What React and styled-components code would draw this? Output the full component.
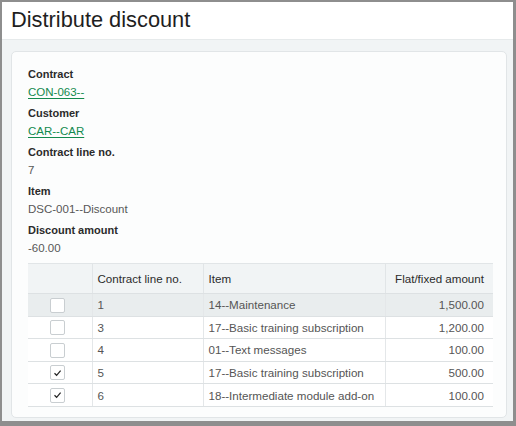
import React from "react";
import styled, { createGlobalStyle } from "styled-components";

const Global = createGlobalStyle`
  html, body { margin: 0; padding: 0; background: #8e8e8e; }
  body { font-family: "Liberation Sans", Arial, Helvetica, sans-serif; }
  * { box-sizing: border-box; }
`;

const Frame = styled.div`
  width: 516px;
  height: 426px;
  border-style: solid;
  border-color: #8e8e8e;
  border-width: 2px 3px 5px 2px;
  background: #f1f4f5;
  display: flex;
  flex-direction: column;
  overflow: hidden;
`;

const Header = styled.header`
  height: 38px;
  flex: none;
  background: #ffffff;
  border-bottom: 1px solid #e6eaeb;
  display: flex;
  align-items: center;
  padding-left: 9px;
`;

const Title = styled.h1`
  margin: 0;
  font-size: 21.8px;
  font-weight: 400;
  color: #1e1e1e;
  line-height: 1;
  padding-bottom: 1px;
`;

const Body = styled.main`
  flex: 1;
  padding: 11px 6px 6px 9px;
  display: flex;
  flex-direction: column;
`;

const Card = styled.section`
  flex: 1;
  background: #fcfdfd;
  border: 1px solid #e1e5e7;
  border-radius: 5px;
  padding: 14px 13px 10px 16px;
  display: flex;
  flex-direction: column;
`;

const Fields = styled.div`
  display: flex;
  flex-direction: column;
  gap: 5px;
`;

const Field = styled.div`
  display: flex;
  flex-direction: column;
`;

const Label = styled.div`
  font-size: 11px;
  font-weight: 700;
  color: #2b2b2b;
  line-height: 17px;
`;

const Value = styled.div`
  font-size: 11.5px;
  color: #575757;
  line-height: 17px;
  padding-top: 1px;
  margin-bottom: -1px;
`;

const Link = styled.a`
  font-size: 11.5px;
  line-height: 17px;
  padding-top: 1px;
  margin-bottom: -1px;
  color: #138a4e;
  text-decoration: underline;
  text-underline-offset: 2px;
  text-decoration-thickness: 1px;
  align-self: flex-start;
  cursor: pointer;
`;

const Table = styled.table`
  margin-top: 7px;
  width: 465px;
  border-collapse: collapse;
  table-layout: fixed;
  font-size: 11.6px;
`;

const Th = styled.th`
  height: 30px;
  background: #f1f4f5;
  border-top: 1px solid #e1e5e7;
  border-bottom: 1px solid #dde1e3;
  border-left: ${(p) => (p.$first ? "none" : "1px solid #e1e5e7")};
  font-weight: 400;
  color: #2b2b2b;
  text-align: ${(p) => (p.$right ? "right" : "left")};
  padding: 0 ${(p) => (p.$right ? "9px" : "5px")} 0 5px;
  white-space: nowrap;
`;

const Row = styled.tr`
  background: ${(p) => (p.$hover ? "#e9edee" : "#ffffff")};
`;

const Td = styled.td`
  height: 22.6px;
  border-bottom: 1px solid #dde1e3;
  border-left: ${(p) => (p.$first ? "none" : "1px solid #e4e7e9")};
  color: #555555;
  text-align: ${(p) => (p.$right ? "right" : p.$center ? "center" : "left")};
  padding: 0 ${(p) => (p.$right ? "9px" : "5px")} 0 ${(p) => (p.$center ? "0" : "5px")};
  white-space: nowrap;
  vertical-align: middle;
`;

const Box = styled.span`
  display: inline-flex;
  align-items: center;
  justify-content: center;
  width: 15px;
  height: 15px;
  background: #ffffff;
  border: 1px solid #c9ced1;
  border-radius: 2px;
  vertical-align: middle;
  margin-left: 1px;
`;

const Check = ({ checked }) => (
  <Box>
    {checked && (
      <svg width="9" height="8" viewBox="0 0 9 8">
        <path d="M1.5 4.3 L3.6 6.3 L7.6 1.6" fill="none" stroke="#222" strokeWidth="1.2" />
      </svg>
    )}
  </Box>
);

const rows = [
  { sel: false, line: "1", item: "14--Maintenance", amt: "1,500.00", hover: true },
  { sel: false, line: "3", item: "17--Basic training subscription", amt: "1,200.00" },
  { sel: false, line: "4", item: "01--Text messages", amt: "100.00" },
  { sel: true, line: "5", item: "17--Basic training subscription", amt: "500.00" },
  { sel: true, line: "6", item: "18--Intermediate module add-on", amt: "100.00" },
];

export default function App() {
  return (
    <>
      <Global />
      <Frame>
        <Header>
          <Title>Distribute discount</Title>
        </Header>
        <Body>
          <Card>
            <Fields>
              <Field>
                <Label>Contract</Label>
                <Link>CON-063--</Link>
              </Field>
              <Field>
                <Label>Customer</Label>
                <Link>CAR--CAR</Link>
              </Field>
              <Field>
                <Label>Contract line no.</Label>
                <Value>7</Value>
              </Field>
              <Field>
                <Label>Item</Label>
                <Value>DSC-001--Discount</Value>
              </Field>
              <Field>
                <Label>Discount amount</Label>
                <Value>-60.00</Value>
              </Field>
            </Fields>
            <Table>
              <colgroup>
                <col style={{ width: 64 }} />
                <col style={{ width: 111 }} />
                <col style={{ width: 182 }} />
                <col style={{ width: 108 }} />
              </colgroup>
              <thead>
                <tr>
                  <Th $first></Th>
                  <Th>Contract line no.</Th>
                  <Th>Item</Th>
                  <Th $right>Flat/fixed amount</Th>
                </tr>
              </thead>
              <tbody>
                {rows.map((r, i) => (
                  <Row key={i} $hover={r.hover}>
                    <Td $first $center>
                      <Check checked={r.sel} />
                    </Td>
                    <Td>{r.line}</Td>
                    <Td>{r.item}</Td>
                    <Td $right>{r.amt}</Td>
                  </Row>
                ))}
              </tbody>
            </Table>
          </Card>
        </Body>
      </Frame>
    </>
  );
}
